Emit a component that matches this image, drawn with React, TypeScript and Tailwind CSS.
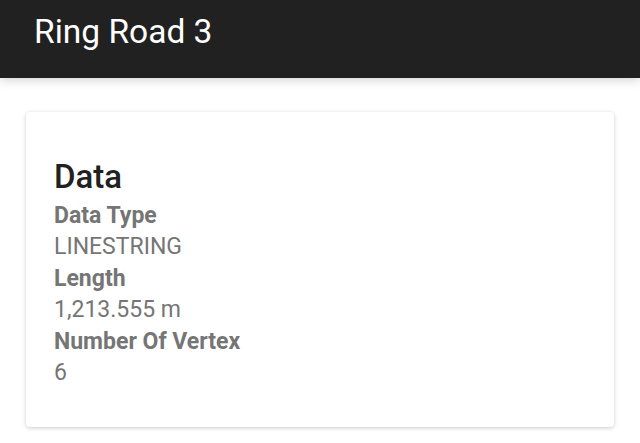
const rows = [
  { label: 'Data Type', value: 'LINESTRING' },
  { label: 'Length', value: '1,213.555 m' },
  { label: 'Number Of Vertex', value: '6' },
];

export default function App() {
  return (
    <div className="min-h-[443px] bg-white font-['Roboto',sans-serif]">
      <header className="relative z-10 h-[78px] bg-[#212121] px-[34px] pt-[15px] shadow-[0_2px_10px_rgba(0,0,0,0.18)]">
        <h1 className="text-[33.5px] leading-none text-white">Ring Road 3</h1>
      </header>

      <main className="px-[26px] pt-[34px]">
        <div className="rounded-[4px] bg-white px-[28px] pt-[45px] pb-[39px] shadow-[0_1px_4px_rgba(0,0,0,0.2)]">
          <h2 className="mb-[3px] text-[33px] leading-[40px] font-medium text-[#212121]">Data</h2>
          {rows.map((row) => (
            <div key={row.label} className="text-[23px] leading-[31.4px] text-[#757575]">
              <div className="font-bold">{row.label}</div>
              <div>{row.value}</div>
            </div>
          ))}
        </div>
      </main>
    </div>
  );
}
